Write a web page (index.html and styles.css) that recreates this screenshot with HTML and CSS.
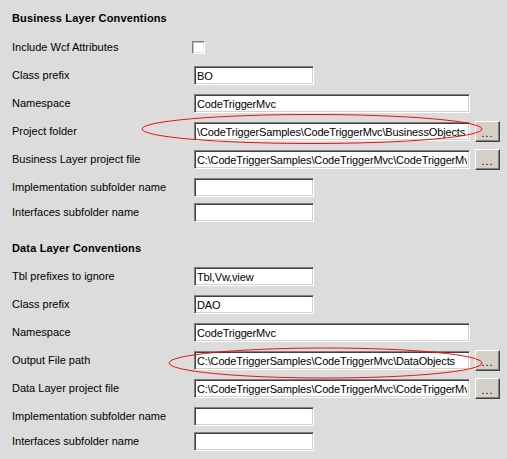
FILE: index.html
```html
<!DOCTYPE html>
<html>
<head>
<meta charset="utf-8">
<link rel="stylesheet" href="styles.css">
</head>
<body>
<div class="page">
  <section class="section first">
    <h2 class="heading">Business Layer Conventions</h2>
    <div class="rows">
      <div class="row"><span class="label">Include Wcf Attributes</span><span class="check"></span></div>
      <div class="row"><span class="label">Class prefix</span><input class="field short" value="BO" readonly></div>
      <div class="row"><span class="label">Namespace</span><input class="field long" value="CodeTriggerMvc" readonly></div>
      <div class="row"><span class="label">Project folder</span><input class="field long" value="\CodeTriggerSamples\CodeTriggerMvc\BusinessObjects" readonly><button class="browse">...</button></div>
      <div class="row"><span class="label">Business Layer project file</span><input class="field long" value="C:\CodeTriggerSamples\CodeTriggerMvc\CodeTriggerMvc.csproj" readonly><button class="browse">...</button></div>
      <div class="row"><span class="label">Implementation subfolder name</span><input class="field short" value="" readonly></div>
      <div class="row last"><span class="label">Interfaces subfolder name</span><input class="field short" value="" readonly></div>
    </div>
  </section>
  <section class="section second">
    <h2 class="heading">Data Layer Conventions</h2>
    <div class="rows">
      <div class="row"><span class="label">Tbl prefixes to ignore</span><input class="field short" value="Tbl,Vw,view" readonly></div>
      <div class="row"><span class="label">Class prefix</span><input class="field short" value="DAO" readonly></div>
      <div class="row"><span class="label">Namespace</span><input class="field long" value="CodeTriggerMvc" readonly></div>
      <div class="row"><span class="label">Output File path</span><input class="field long" value="C:\CodeTriggerSamples\CodeTriggerMvc\DataObjects" readonly><button class="browse">...</button></div>
      <div class="row"><span class="label">Data Layer project file</span><input class="field long" value="C:\CodeTriggerSamples\CodeTriggerMvc\CodeTriggerMvc.csproj" readonly><button class="browse">...</button></div>
      <div class="row"><span class="label">Implementation subfolder name</span><input class="field short" value="" readonly></div>
      <div class="row last"><span class="label">Interfaces subfolder name</span><input class="field short" value="" readonly></div>
    </div>
  </section>
  <svg class="marks" width="507" height="459" viewBox="0 0 507 459">
    <ellipse cx="312" cy="129" rx="170" ry="14.5" fill="none" stroke="#f01010" stroke-width="1"/>
    <ellipse cx="325.5" cy="363" rx="156.5" ry="15" fill="none" stroke="#f01010" stroke-width="1"/>
  </svg>
</div>
</body>
</html>
```

FILE: styles.css
```css
html, body {
  margin: 0;
  padding: 0;
  background: #dcdcdc;
}
.page {
  position: relative;
  width: 507px;
  height: 459px;
  box-sizing: border-box;
  padding: 12px 0 0 12px;
  font-family: "Liberation Sans", Arial, sans-serif;
  font-size: 11px;
  line-height: 13px;
  color: #000;
  overflow: hidden;
}
.heading {
  margin: 0 0 13px 0;
  font-size: 11px;
  line-height: 13px;
  font-weight: bold;
  letter-spacing: 0.15px;
}
.section.second {
  margin-top: 20px;
}
.section.second .heading {
  margin-bottom: 12px;
}
.rows {
  display: flex;
  flex-direction: column;
  gap: 9px;
}
.row {
  display: flex;
  align-items: center;
  height: 19px;
}
.row.last {
  margin-top: -3px;
}
.label {
  width: 182px;
  flex: none;
  white-space: nowrap;
}
.check {
  width: 13px;
  height: 13px;
  box-sizing: border-box;
  margin-left: -2px;
  background: #fff;
  border: 1px solid;
  border-color: #808080 #ffffff #ffffff #808080;
  box-shadow: inset 1px 1px #c0c0c0, inset -1px -1px #e8e8e8;
}
.field {
  box-sizing: border-box;
  height: 19px;
  margin: 0;
  padding: 0 2px;
  background: #fff;
  border: 1px solid;
  border-color: #808080 #ffffff #ffffff #808080;
  box-shadow: inset 1px 1px #404040, inset -1px -1px #d4d0c8;
  font-family: "Liberation Sans", Arial, sans-serif;
  font-size: 11px;
  letter-spacing: -0.15px;
  color: #000;
  outline: none;
}
.field.short {
  width: 120px;
}
.field.long {
  width: 276px;
}
.browse {
  box-sizing: border-box;
  width: 25px;
  height: 21px;
  margin: 0 0 0 5px;
  padding: 4px 0 0 0;
  background: #d4d0c8;
  border: 1px solid;
  border-color: #ffffff #404040 #404040 #ffffff;
  box-shadow: inset -1px -1px #808080;
  font-family: "Liberation Sans", Arial, sans-serif;
  font-size: 11px;
  line-height: 13px;
  color: #000;
  letter-spacing: 1px;
}
.marks {
  position: absolute;
  left: 0;
  top: 0;
  pointer-events: none;
}
```
